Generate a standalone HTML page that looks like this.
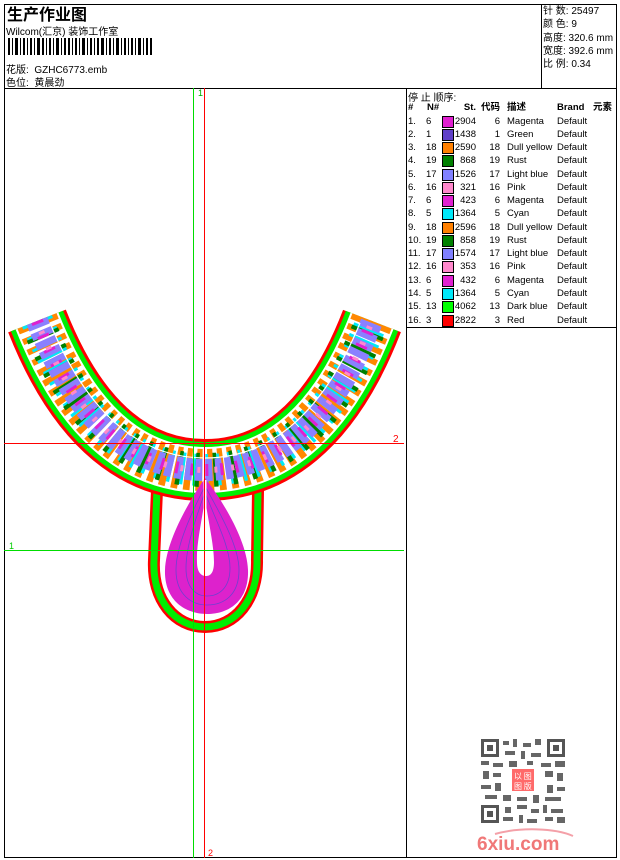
<!DOCTYPE html>
<html><head><meta charset="utf-8"><style>
body{margin:0;width:620px;height:860px;background:#fff;position:relative;overflow:hidden;font-family:"Liberation Sans","Noto Sans CJK SC",sans-serif;font-size:10px;color:#000}
.a{position:absolute;white-space:nowrap}
.ln{position:absolute;background:#000}
.row{position:absolute;left:407px;height:13px;line-height:13px;font-size:9.5px;white-space:nowrap}
.row span{position:absolute;top:0}
.sw{display:block;width:10px;height:10px;border:1px solid #000;top:1px!important}
</style></head><body>
<div class="ln" style="left:4px;top:4px;width:613px;height:1px"></div>
<div class="ln" style="left:4px;top:857px;width:613px;height:1px"></div>
<div class="ln" style="left:4px;top:4px;width:1px;height:854px"></div>
<div class="ln" style="left:616px;top:4px;width:1px;height:854px"></div>
<div class="ln" style="left:4px;top:88px;width:613px;height:1px"></div>
<div class="ln" style="left:541px;top:4px;width:1px;height:84px"></div>
<div class="ln" style="left:406px;top:88px;width:1px;height:770px"></div>
<div class="ln" style="left:406px;top:327px;width:211px;height:1px"></div>

<div class="a" style="left:7px;top:1px;font-size:16px;font-weight:bold">生产作业图</div>
<div class="a" style="left:6px;top:23px;font-size:10px">Wilcom(汇京) 装饰工作室</div>
<svg class="a" style="left:8px;top:38px" width="145" height="17">
<g fill="#000">
<rect x="0" y="0" width="2" height="17"/><rect x="4" y="0" width="1" height="17"/><rect x="7" y="0" width="3" height="17"/><rect x="12" y="0" width="1" height="17"/><rect x="15" y="0" width="2" height="17"/><rect x="19" y="0" width="1" height="17"/><rect x="22" y="0" width="2" height="17"/><rect x="26" y="0" width="1" height="17"/><rect x="29" y="0" width="3" height="17"/><rect x="34" y="0" width="2" height="17"/><rect x="38" y="0" width="1" height="17"/><rect x="41" y="0" width="2" height="17"/><rect x="45" y="0" width="1" height="17"/><rect x="48" y="0" width="3" height="17"/><rect x="53" y="0" width="1" height="17"/><rect x="56" y="0" width="2" height="17"/><rect x="60" y="0" width="2" height="17"/><rect x="64" y="0" width="1" height="17"/><rect x="67" y="0" width="2" height="17"/><rect x="71" y="0" width="1" height="17"/><rect x="74" y="0" width="3" height="17"/><rect x="79" y="0" width="1" height="17"/><rect x="82" y="0" width="2" height="17"/><rect x="86" y="0" width="1" height="17"/><rect x="89" y="0" width="2" height="17"/><rect x="93" y="0" width="3" height="17"/><rect x="98" y="0" width="1" height="17"/><rect x="101" y="0" width="2" height="17"/><rect x="105" y="0" width="1" height="17"/><rect x="108" y="0" width="3" height="17"/><rect x="113" y="0" width="1" height="17"/><rect x="116" y="0" width="2" height="17"/><rect x="120" y="0" width="1" height="17"/><rect x="123" y="0" width="2" height="17"/><rect x="127" y="0" width="1" height="17"/><rect x="130" y="0" width="3" height="17"/><rect x="135" y="0" width="1" height="17"/><rect x="138" y="0" width="2" height="17"/><rect x="142" y="0" width="2" height="17"/>
</g></svg>
<div class="a" style="left:6px;top:61px">花版:&nbsp; GZHC6773.emb</div>
<div class="a" style="left:6px;top:74px">色位:&nbsp; 黄晨劲</div>

<div class="a" style="left:543px;top:5px;line-height:13.3px">针 数: 25497<br>颜 色: 9<br>高度: 320.6 mm<br>宽度: 392.6 mm<br>比 例: 0.34</div>

<div class="a" style="left:408px;top:89px">停 止 顺序:</div>
<div class="row" style="top:101px;font-weight:bold;text-decoration:underline;width:210px">
<span style="left:1px">#</span><span style="left:20px">N#</span><span style="right:141px">St.</span><span style="right:117px">代码</span><span style="left:100px">描述</span><span style="left:150px">Brand</span><span style="left:186px">元素</span></div>

<div id="rows"></div>
<script>
var d=[["1.","6","#e020d0","2904","6","Magenta"],["2.","1","#6040c8","1438","1","Green"],["3.","18","#ff8000","2590","18","Dull yellow"],["4.","19","#008000","868","19","Rust"],["5.","17","#8080ff","1526","17","Light blue"],["6.","16","#ff88cc","321","16","Pink"],["7.","6","#e020d0","423","6","Magenta"],["8.","5","#00e8f8","1364","5","Cyan"],["9.","18","#ff8000","2596","18","Dull yellow"],["10.","19","#008000","858","19","Rust"],["11.","17","#8080ff","1574","17","Light blue"],["12.","16","#ff88cc","353","16","Pink"],["13.","6","#e020d0","432","6","Magenta"],["14.","5","#00e8f8","1364","5","Cyan"],["15.","13","#00ff00","4062","13","Dark blue"],["16.","3","#ff0000","2822","3","Red"]];
var h="";d.forEach(function(r,i){h+='<div class="row" style="top:'+(114.5+i*13.27)+'px;width:210px"><span style="left:1px">'+r[0]+'</span><span style="left:19px">'+r[1]+'</span><span class="sw" style="left:35px;background:'+r[2]+'"></span><span style="right:141px">'+r[3]+'</span><span style="right:117px">'+r[4]+'</span><span style="left:100px">'+r[5]+'</span><span style="left:150px">Default</span></div>';});
document.getElementById("rows").innerHTML=h;
</script>

<svg class="a" style="left:0;top:0" width="406" height="858">
<defs><path id="c" d="M37,321 C80,430 140,470 205,470 C270,470 330,430 372,321"/></defs>
<path d="M157,490 L154,560 C152,600 175,627 205,627 C235,627 258,600 257,560 L258,490" fill="none" stroke="#ff0000" stroke-width="12"/>
<path d="M157,490 L154,560 C152,600 175,627 205,627 C235,627 258,600 257,560 L258,490" fill="none" stroke="#00ee00" stroke-width="7"/>
<use href="#c" fill="none" stroke="#ff0000" stroke-width="62"/>
<use href="#c" fill="none" stroke="#00ee00" stroke-width="56"/>
<use href="#c" fill="none" stroke="#fff" stroke-width="46"/>
<use href="#c" fill="none" stroke="#ff8800" stroke-width="42" stroke-dasharray="6 5"/>
<use href="#c" fill="none" stroke="#00e8f8" stroke-width="32" stroke-dasharray="3 9"/>
<use href="#c" fill="none" stroke="#008000" stroke-width="34" stroke-dasharray="4 14" stroke-dashoffset="4"/>
<use href="#c" fill="none" stroke="#8a80ff" stroke-width="22" stroke-dasharray="7 3"/>
<use href="#c" fill="none" stroke="#e020d0" stroke-width="12" stroke-dasharray="3 12"/>
<use href="#c" fill="none" stroke="#ff88cc" stroke-width="6" stroke-dasharray="3 14" stroke-dashoffset="6"/>
<path d="M50,323 C90,420 145,458 205,458 C265,458 320,420 360,323" fill="none" stroke="#fff" stroke-width="1.2"/>
<path d="M205,478 C190,500 166,540 165,570 C164,600 185,614 207,614 C230,614 249,600 248,570 C247,540 222,500 205,478 Z M205,498 C202,520 196,545 197,562 C197,572 201,576 206,576 C211,576 214,572 214,562 C214,545 208,520 205,498 Z" fill="#dd22cc" fill-rule="evenodd"/>
<path d="M205,486 C193,510 176,545 176,570 C176,595 192,605 207,605 C224,605 239,595 239,570 C239,545 218,510 205,486" fill="none" stroke="#7040d0" stroke-width="0.8"/>
<path d="M205,492 C197,515 186,545 186,568 C186,588 196,596 207,596 C219,596 230,588 230,568 C230,545 213,515 205,492" fill="none" stroke="#7040d0" stroke-width="0.8"/>
<path d="M205,480 L205,520" stroke="#fff" stroke-width="3"/>
<line x1="193.5" y1="88" x2="193.5" y2="858" stroke="#00dd00" stroke-width="1"/>
<line x1="204.5" y1="88" x2="204.5" y2="858" stroke="#ff0000" stroke-width="1"/>
<line x1="4" y1="443.5" x2="404" y2="443.5" stroke="#ff0000" stroke-width="1"/>
<line x1="4" y1="550.5" x2="404" y2="550.5" stroke="#00dd00" stroke-width="1"/>
<text x="198" y="96" fill="#00aa00" font-size="9" font-family="Liberation Sans">1</text>
<text x="208" y="856" fill="#ff0000" font-size="9" font-family="Liberation Sans">2</text>
<text x="393" y="442" fill="#ff0000" font-size="10" font-family="Liberation Sans">2</text>
<text x="9" y="549" fill="#00cc00" font-size="9" font-family="Liberation Sans">1</text>
</svg>

<svg class="a" style="left:481px;top:739px" width="84" height="84">
<rect width="84" height="84" fill="#fff"/>
<g fill="#555"><rect x="0" y="0" width="18" height="18"/><rect x="66" y="0" width="18" height="18"/><rect x="0" y="66" width="18" height="18"/></g>
<g fill="#fff"><rect x="3" y="3" width="12" height="12"/><rect x="69" y="3" width="12" height="12"/><rect x="3" y="69" width="12" height="12"/></g>
<g fill="#555"><rect x="6" y="6" width="6" height="6"/><rect x="72" y="6" width="6" height="6"/><rect x="6" y="72" width="6" height="6"/></g>
<g fill="#666">
<rect x="22" y="2" width="6" height="4"/><rect x="32" y="0" width="4" height="8"/><rect x="42" y="4" width="8" height="4"/><rect x="54" y="0" width="6" height="6"/><rect x="24" y="12" width="10" height="4"/><rect x="40" y="12" width="4" height="8"/><rect x="50" y="14" width="10" height="4"/>
<rect x="0" y="22" width="8" height="4"/><rect x="12" y="24" width="10" height="4"/><rect x="28" y="22" width="8" height="6"/><rect x="46" y="22" width="6" height="4"/><rect x="60" y="24" width="10" height="4"/><rect x="74" y="22" width="10" height="6"/>
<rect x="2" y="32" width="6" height="8"/><rect x="12" y="34" width="8" height="4"/><rect x="64" y="32" width="8" height="6"/><rect x="76" y="34" width="6" height="8"/>
<rect x="0" y="46" width="10" height="4"/><rect x="14" y="44" width="6" height="8"/><rect x="66" y="46" width="6" height="8"/><rect x="76" y="48" width="8" height="4"/>
<rect x="4" y="56" width="12" height="4"/><rect x="22" y="56" width="8" height="6"/><rect x="36" y="58" width="10" height="4"/><rect x="52" y="56" width="6" height="8"/><rect x="64" y="58" width="16" height="4"/>
<rect x="24" y="68" width="6" height="6"/><rect x="36" y="66" width="10" height="4"/><rect x="50" y="70" width="8" height="4"/><rect x="62" y="66" width="4" height="8"/><rect x="70" y="70" width="12" height="4"/>
<rect x="22" y="78" width="10" height="4"/><rect x="38" y="76" width="4" height="8"/><rect x="46" y="80" width="10" height="4"/><rect x="64" y="78" width="8" height="4"/><rect x="76" y="78" width="8" height="6"/>
</g>
<rect x="31" y="30" width="22" height="22" fill="#ff6a6a"/>
<text x="33" y="40" font-size="8" fill="#fff" font-family="Noto Sans CJK SC">以 图</text>
<text x="33" y="50" font-size="8" fill="#fff" font-family="Noto Sans CJK SC">图 版</text>
</svg>
<svg class="a" style="left:475px;top:826px" width="105" height="28">
<path d="M20,8 C45,1 80,2 98,10" fill="none" stroke="#f4a0a8" stroke-width="2"/>
<text x="2" y="24" font-size="19" font-weight="bold" fill="#f07878" font-family="Liberation Sans">6xiu.com</text>
</svg>
</body></html>
